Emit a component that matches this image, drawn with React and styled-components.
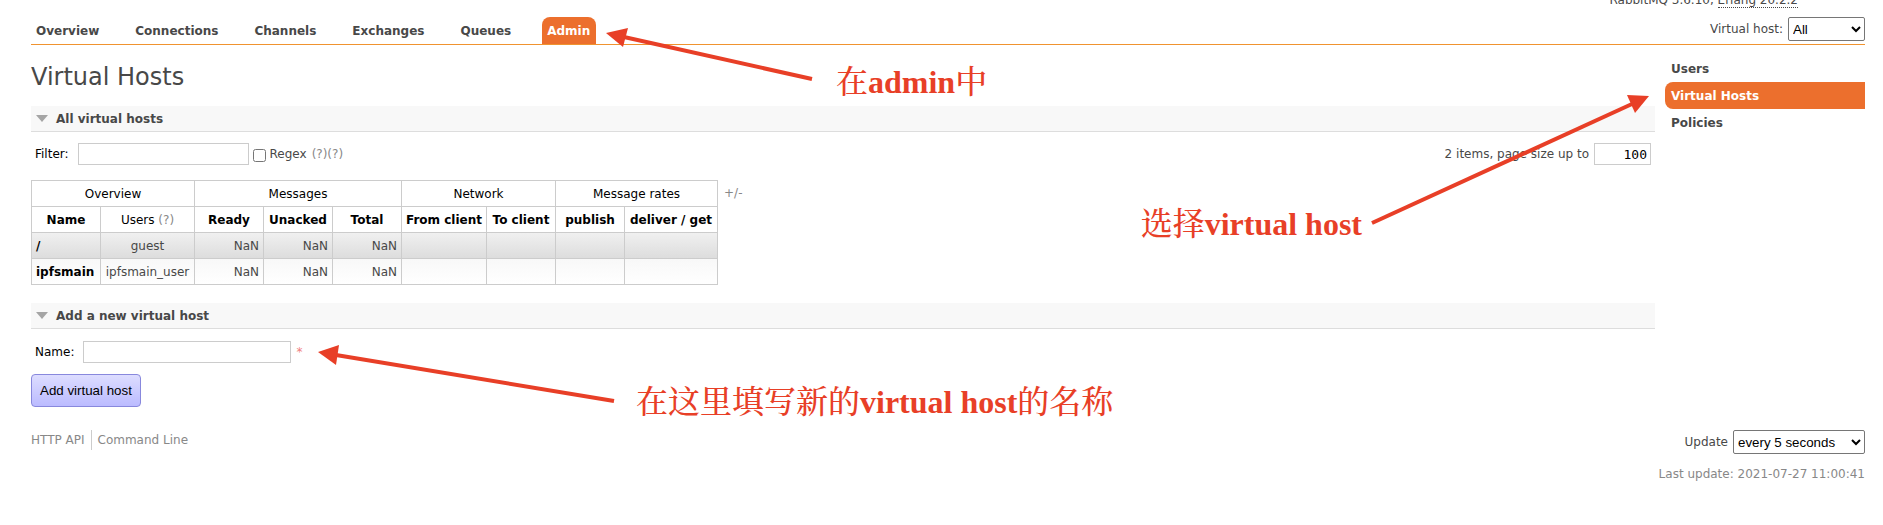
import React from "react";
import styled, { createGlobalStyle } from "styled-components";

const GlobalStyle = createGlobalStyle`
  * { box-sizing: border-box; }
  body {
    margin: 0;
    background: #fff;
    color: #484848;
    font: 12px/16px Verdana, "DejaVu Sans", sans-serif;
  }
`;

const Page = styled.div`
  position: relative;
  min-height: 100vh;
  padding: 0 18px 24px 31px;
  overflow: hidden;
`;

const VersionBar = styled.div`
  display: flex;
  justify-content: flex-end;
  align-items: flex-end;
  height: 8px;
  padding-right: 67px;
  overflow: hidden;
  white-space: pre;
`;

const Version = styled.abbr`
  border-bottom: 1px dotted #484848;
  line-height: 14px;
  text-decoration: none;
`;

const TopBar = styled.header`
  display: flex;
  justify-content: space-between;
  align-items: flex-end;
  height: 37px;
  border-bottom: 1px solid #f0932f;
`;

const Tabs = styled.nav`
  display: flex;
  gap: 25px;
`;

const Tab = styled.a`
  padding: 6px 6px 5px 5px;
  border-radius: 8px 8px 0 0;
  background: ${(p) => (p.$active ? "#ec6f2d" : "transparent")};
  color: ${(p) => (p.$active ? "#fff" : "#484848")};
  font-weight: bold;
  text-decoration: none;
`;

const SelectLabel = styled.label`
  display: flex;
  align-items: center;
  gap: 5px;
`;

const Select = styled.select`
  width: ${(p) => p.$width};
  height: 24px;
  border: 1px solid #767676;
  border-radius: 2px;
  background: #fff;
  color: #000;
  font-family: Arial, "Liberation Sans", sans-serif;
`;

const HostPicker = styled(SelectLabel)`
  padding-bottom: 3px;
`;

const Columns = styled.div`
  display: grid;
  grid-template-columns: minmax(0, 1fr) 200px;
  gap: 10px;
`;

const Title = styled.h1`
  margin: 17px 0 14px;
  font-size: 24px;
  line-height: 30px;
  font-weight: normal;
`;

const SideNav = styled.nav`
  display: flex;
  flex-direction: column;
  padding-top: 10px;
`;

const SideLink = styled.a`
  padding: 6px 6px 5px;
  border-radius: 8px 0 0 8px;
  background: ${(p) => (p.$active ? "#ec6f2d" : "transparent")};
  color: ${(p) => (p.$active ? "#fff" : "#484848")};
  font-weight: bold;
  text-decoration: none;
`;

const SectionTitle = styled.h2`
  display: flex;
  align-items: center;
  gap: 8px;
  height: 26px;
  margin: 0;
  padding-left: 5px;
  border-bottom: 1px solid #ddd;
  background: #f8f8f8;
  font-size: 12px;
`;

const Triangle = styled.span`
  border: solid transparent;
  border-width: 7px 6px 0;
  border-top-color: #a5a5a5;
`;

const FilterBar = styled.div`
  display: flex;
  justify-content: space-between;
  align-items: center;
  padding: 11px 4px 15px;
`;

const Field = styled.div`
  display: flex;
  align-items: center;
`;

const FieldLabel = styled.label`
  margin-right: ${(p) => p.$gap || "9px"};
  color: ${(p) => (p.$muted ? "#484848" : "#000")};
`;

const TextBox = styled.input`
  width: ${(p) => p.$width};
  height: 22px;
  padding: 2px 3px;
  border: 1px solid #ccc;
  background: #fff;
  color: #000;
  font: 13px "DejaVu Sans Mono", monospace;
  text-align: ${(p) => p.$align || "left"};
`;

const Checkbox = styled.input`
  width: 13px;
  height: 13px;
  margin: 3px 4px 0 4px;
`;

const Help = styled.span`
  color: #888;
`;

const TableArea = styled.div`
  display: flex;
  align-items: flex-start;
  gap: 6px;
  margin-bottom: 18px;
`;

const DataTable = styled.table`
  width: 687px;
  table-layout: fixed;
  border-collapse: collapse;
`;

const HeadCell = styled.th`
  height: 26px;
  padding: 0;
  border: 1px solid #ccc;
  color: #000;
  font-weight: ${(p) => (p.$plain ? "normal" : "bold")};
  white-space: nowrap;
`;

const Row = styled.tr`
  background: ${(p) =>
    p.$shaded
      ? "linear-gradient(#f0f0f0, #dcdcdc)"
      : "linear-gradient(#f8f8f8, #fff)"};
`;

const Cell = styled.td`
  height: 26px;
  padding: 0 4px;
  border: 1px solid #ccc;
  color: ${(p) => (p.$strong ? "#000" : "#484848")};
  font-weight: ${(p) => (p.$strong ? "bold" : "normal")};
  text-align: ${(p) => p.$align || "left"};
  white-space: nowrap;
`;

const CellLink = styled.a`
  color: inherit;
  text-decoration: none;
`;

const ColumnToggle = styled.button`
  height: 26px;
  padding: 0;
  border: 0;
  background: none;
  color: #888;
  font: inherit;
`;

const AddForm = styled.form`
  padding-top: 12px;
`;

const NameField = styled(Field)`
  padding-left: 4px;
  margin-bottom: 11px;
`;

const Required = styled.span`
  margin-left: 5px;
  color: #f08080;
`;

const SubmitButton = styled.button`
  height: 33px;
  padding: 0 8px;
  border: 1px solid #8888dd;
  border-radius: 4px;
  background: linear-gradient(#ddf, #bbf);
  color: #000;
  font-family: Arial, "Liberation Sans", sans-serif;
`;

const Footer = styled.footer`
  display: flex;
  justify-content: space-between;
  align-items: flex-start;
  margin-top: 23px;
`;

const FooterLinks = styled.div`
  display: flex;
`;

const FooterLink = styled.a`
  padding: 2px 6px;
  border-left: 1px solid #ccc;
  color: #888;
  text-decoration: none;
  &:first-child { padding-left: 0; border-left: 0; }
`;

const Status = styled.div`
  display: flex;
  flex-direction: column;
  align-items: flex-end;
  gap: 12px;
`;

const Arrow = styled.svg`
  position: absolute;
  top: ${(p) => p.$top};
  left: ${(p) => p.$left || "auto"};
  right: ${(p) => p.$right || "auto"};
  color: #e83f27;
  pointer-events: none;
`;

const Note = styled.div`
  position: absolute;
  top: ${(p) => p.$top};
  left: ${(p) => p.$left || "auto"};
  right: ${(p) => p.$right || "auto"};
  color: #e83f27;
  font: bold 32px/40px "Liberation Serif", "Noto Serif CJK SC", "Noto Sans CJK SC", serif;
  white-space: nowrap;
  pointer-events: none;
`;

const Han = styled.span`
  font-weight: 500;
`;

const tabs = ["Overview", "Connections", "Channels", "Exchanges", "Queues", "Admin"];
const sideLinks = ["Users", "Virtual Hosts", "Policies"];
const groups = [["Overview", 2], ["Messages", 3], ["Network", 2], ["Message rates", 2]];
const columns = [
  ["Name", 69], ["Users", 94], ["Ready", 69], ["Unacked", 69], ["Total", 69],
  ["From client", 85], ["To client", 69], ["publish", 69], ["deliver / get", 93],
];
const hosts = [
  { name: "/", users: "guest" },
  { name: "ipfsmain", users: "ipfsmain_user" },
];

export default function App() {
  return (
    <Page>
      <GlobalStyle />
      <VersionBar>
        <span>RabbitMQ 3.6.10, <Version>Erlang 20.2.2</Version></span>
      </VersionBar>
      <TopBar>
        <Tabs>
          {tabs.map((t) => (
            <Tab key={t} href="#" $active={t === "Admin"}>{t}</Tab>
          ))}
        </Tabs>
        <HostPicker>
          Virtual host:
          <Select $width="77px"><option>All</option></Select>
        </HostPicker>
      </TopBar>

      <Columns>
        <main>
          <Title>Virtual Hosts</Title>
          <SectionTitle><Triangle />All virtual hosts</SectionTitle>
          <FilterBar>
            <Field>
              <FieldLabel htmlFor="filter">Filter:</FieldLabel>
              <TextBox id="filter" $width="171px" />
              <Checkbox id="regex" type="checkbox" />
              <FieldLabel htmlFor="regex" $muted $gap="5px">Regex</FieldLabel>
              <Help>(?)(?)</Help>
            </Field>
            <Field>
              <FieldLabel htmlFor="pagesize" $muted $gap="5px">2 items, page size up to</FieldLabel>
              <TextBox id="pagesize" $width="57px" $align="right" defaultValue="100" />
            </Field>
          </FilterBar>

          <TableArea>
            <DataTable>
              <colgroup>
                {columns.map(([c, w]) => <col key={c} width={w} />)}
              </colgroup>
              <thead>
                <tr>
                  {groups.map(([g, span]) => (
                    <HeadCell key={g} colSpan={span} $plain>{g}</HeadCell>
                  ))}
                </tr>
                <tr>
                  {columns.map(([c]) => (
                    <HeadCell key={c} $plain={c === "Users"}>
                      {c}{c === "Users" && <Help> (?)</Help>}
                    </HeadCell>
                  ))}
                </tr>
              </thead>
              <tbody>
                {hosts.map((h, i) => (
                  <Row key={h.name} $shaded={i % 2 === 0}>
                    <Cell $strong><CellLink href="#">{h.name}</CellLink></Cell>
                    <Cell $align="center">{h.users}</Cell>
                    <Cell $align="right">NaN</Cell>
                    <Cell $align="right">NaN</Cell>
                    <Cell $align="right">NaN</Cell>
                    <Cell /><Cell /><Cell /><Cell />
                  </Row>
                ))}
              </tbody>
            </DataTable>
            <ColumnToggle type="button">+/-</ColumnToggle>
          </TableArea>

          <SectionTitle><Triangle />Add a new virtual host</SectionTitle>
          <AddForm onSubmit={(e) => e.preventDefault()}>
            <NameField>
              <FieldLabel htmlFor="name">Name:</FieldLabel>
              <TextBox id="name" $width="208px" />
              <Required>*</Required>
            </NameField>
            <SubmitButton type="submit">Add virtual host</SubmitButton>
          </AddForm>
        </main>
        <SideNav>
          {sideLinks.map((s) => (
            <SideLink key={s} href="#" $active={s === "Virtual Hosts"}>{s}</SideLink>
          ))}
        </SideNav>
      </Columns>

      <Footer>
        <FooterLinks>
          <FooterLink href="#">HTTP API</FooterLink>
          <FooterLink href="#">Command Line</FooterLink>
        </FooterLinks>
        <Status>
          <SelectLabel>
            Update
            <Select $width="132px"><option>every 5 seconds</option></Select>
          </SelectLabel>
          <Help>Last update: 2021-07-27 11:00:41</Help>
        </Status>
      </Footer>

      <Arrow $top="20px" $left="600px" width="220" height="70" aria-hidden="true">
        <path d="M6 13 28 8 23 27Z" fill="currentColor" />
        <path d="M24 17 212 59" stroke="currentColor" strokeWidth="4" />
      </Arrow>
      <Arrow $top="90px" $right="223px" width="300" height="140" aria-hidden="true">
        <path d="M289 6 267 5 275 23Z" fill="currentColor" />
        <path d="M12 133 272 14" stroke="currentColor" strokeWidth="4" />
      </Arrow>
      <Arrow $top="340px" $left="310px" width="310" height="70" aria-hidden="true">
        <path d="M8 12 29 5 26 25Z" fill="currentColor" />
        <path d="M26 15 304 61" stroke="currentColor" strokeWidth="4" />
      </Arrow>
      <Note $top="62px" $left="836px"><Han>在</Han>admin<Han>中</Han></Note>
      <Note $top="204px" $right="521px"><Han>选择</Han>virtual host</Note>
      <Note $top="382px" $left="636px"><Han>在这里填写新的</Han>virtual host<Han>的名称</Han></Note>
    </Page>
  );
}
